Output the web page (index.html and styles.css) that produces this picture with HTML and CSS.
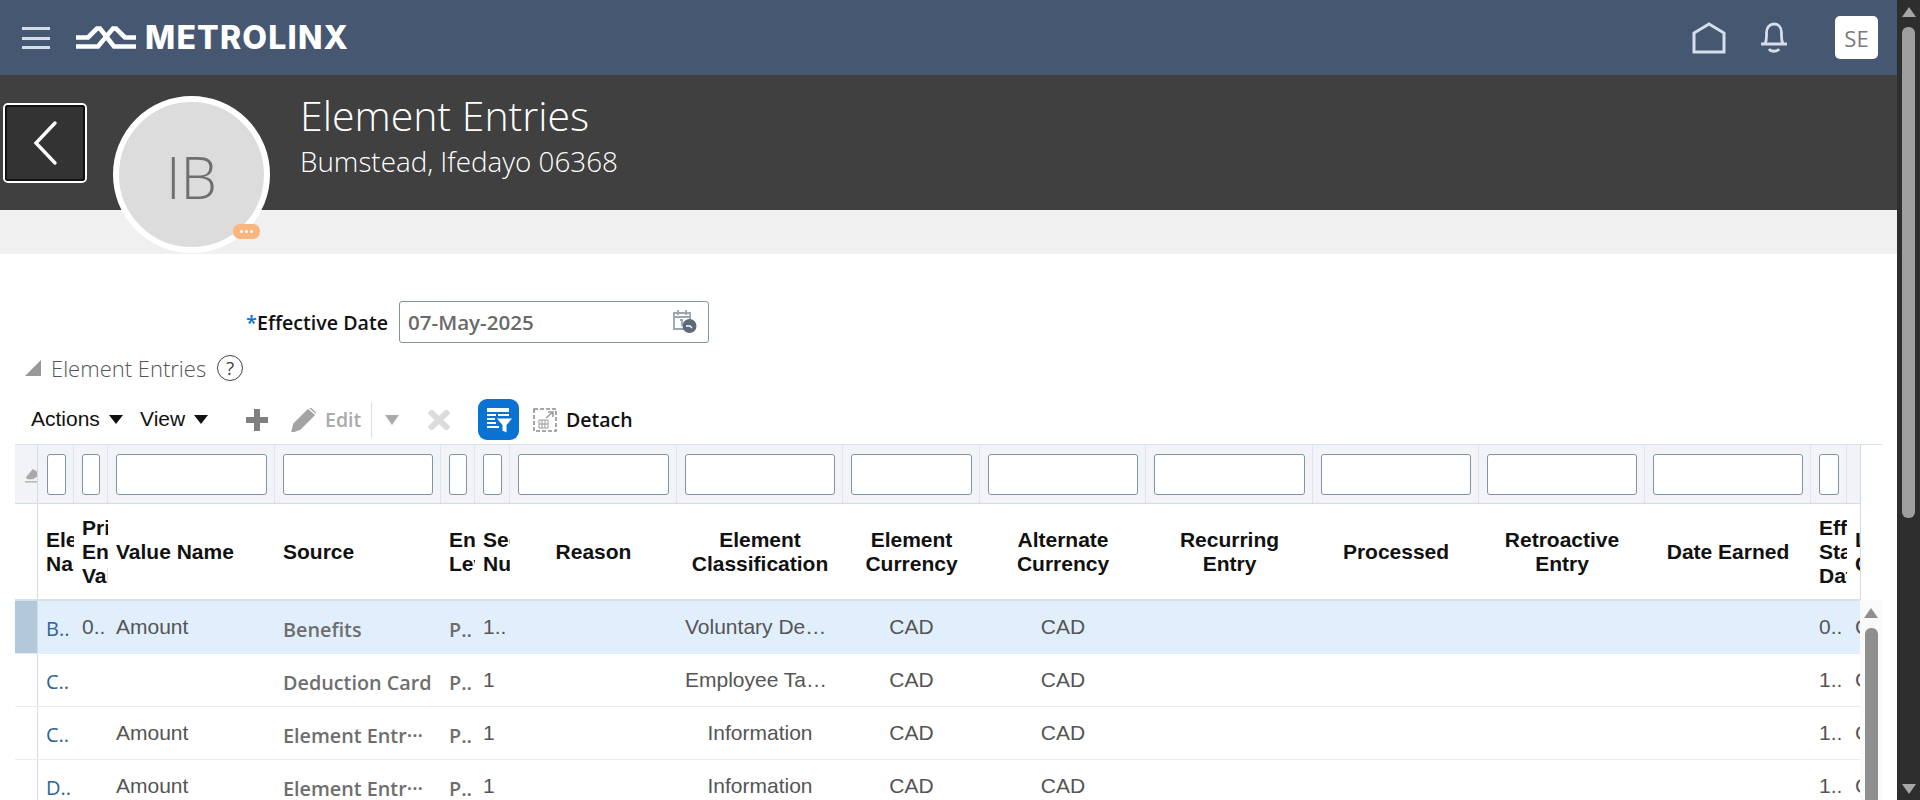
FILE: index.html
```html
<!DOCTYPE html>
<html lang="en">
<head>
<meta charset="utf-8">
<title>Element Entries</title>
<link rel="stylesheet" href="styles.css">
</head>
<body>
<div class="app">
  <div class="page">
    <header class="topbar">
      <div class="menu"><span></span><span></span><span></span></div>
      <svg class="logo-mark" width="60" height="24" viewBox="0 0 60 24"><path d="M0 11.5H12L21 2.5H24L38 20.5H60M0 20.5H22L37 2.5H40L49 11.5H60" fill="none" stroke="#fff" stroke-width="4.600"/></svg>
      <span class="logo-text">METROLINX</span>
      <div class="top-actions">
        <svg class="home" width="34" height="32" viewBox="0 0 34 32"><path d="M2 30V11L17 2L32 11V30Z" fill="none" stroke="#d5deea" stroke-width="3"/></svg>
        <svg class="bell" width="28" height="32" viewBox="0 0 28 32"><path d="M1 22H27M5 22C7 18 6.500 14 6.500 10.500C6.500 5 10 2 14 2C18 2 21.500 5 21.500 10.500C21.500 14 21 18 23 22M9 27C11 30 17 30 19 27" fill="none" stroke="#d5deea" stroke-width="2.800"/></svg>
        <div class="user-tile">SE</div>
      </div>
    </header>

    <section class="hero">
      <button class="back" type="button" aria-label="Back"><svg width="26" height="46" viewBox="0 0 26 46"><path d="M23 3L4 23L23 43" fill="none" stroke="#fff" stroke-width="3.400" stroke-linecap="round"/></svg></button>
      <div class="avatar">IB<span class="badge"><i></i><i></i><i></i></span></div>
      <div class="hero-text">
        <h1>Element Entries</h1>
        <p>Bumstead, Ifedayo 06368</p>
      </div>
    </section>
    <div class="band"></div>

    <main class="content">
      <div class="date-row">
        <label class="date-label"><span class="req">*</span>Effective Date</label>
        <div class="date-input">
          <span>07-May-2025</span>
          <svg width="28" height="26" viewBox="0 0 28 26"><path d="M3 4H19V20H3ZM3 8H19M7 1V6M15 1V6M9 11H11V17" fill="none" stroke="#9aa5ae" stroke-width="1.800"/><circle cx="18.500" cy="17" r="7" fill="#5d6b78"/><path d="M15 17H19L21 19" fill="none" stroke="#fff" stroke-width="1.300"/></svg>
        </div>
      </div>

      <div class="section-title">
        <span class="tri"></span>
        <h2>Element Entries</h2>
        <span class="help">?</span>
      </div>

      <div class="toolbar">
        <span class="menu-btn actions">Actions<i class="caret"></i></span>
        <span class="menu-btn view">View<i class="caret"></i></span>
        <svg class="plus" width="22" height="22" viewBox="0 0 22 22"><path d="M11 0V22M0 11H22" stroke="#808080" stroke-width="6"/></svg>
        <svg class="pencil" width="26" height="24" viewBox="0 0 26 24"><path d="M1 24L3 16L17 2L23 7L9 21ZM19 0L25 5" fill="#a3a3a3" stroke="#a3a3a3" stroke-width="1.500"/></svg>
        <span class="edit">Edit</span>
        <span class="sep"></span>
        <i class="caret small"></i>
        <svg class="cross" width="22" height="20" viewBox="0 0 22 20"><path d="M1.500 1L20.500 19M20.500 1L1.500 19" stroke="#dcdcdc" stroke-width="6"/></svg>
        <span class="filter-btn">
          <svg width="30" height="30" viewBox="0 0 30 30"><path d="M3 3H25V7H3ZM3 9H12V11H3ZM3 13H11V15H3ZM3 17H12V19H3ZM3 21H15V23H3ZM14 9H25V11H14Z" fill="#fff"/><path d="M12 13H29L23 20V28L18 26V20Z" fill="#fff" stroke="#0a72d1" stroke-width="1"/></svg>
        </span>
        <svg class="detach-icon" width="24" height="24" viewBox="0 0 24 24"><path d="M1 1H23V23H1Z" fill="none" stroke="#8a8a8a" stroke-width="1.500" stroke-dasharray="4 2"/><path d="M13 10L20 4M15 4H20V9" fill="none" stroke="#9a9a9a" stroke-width="1.500"/><path d="M6 12H15V20H6ZM6 16H15M9 12V20M12 12V20" fill="none" stroke="#9a9a9a"/></svg>
        <span class="detach">Detach</span>
      </div>

      <div class="table">
        <div class="grid-area">
          <div class="row filters">
            <div class="fcell sel-head"><svg width="14" height="20" viewBox="0 0 14 20"><path d="M1 13L9 3L14 6V12L9 15H3Z" fill="#a8a8a8"/><path d="M0 18H14" stroke="#a8a8a8" stroke-width="1.500"/></svg></div>
            <div class="fcell first"><input class="filter" aria-label="Element Name"></div>
            <div class="fcell"><input class="filter" aria-label="Primary Entry Value"></div>
            <div class="fcell"><input class="filter" aria-label="Value Name"></div>
            <div class="fcell"><input class="filter" aria-label="Source"></div>
            <div class="fcell"><input class="filter" aria-label="Entry Level"></div>
            <div class="fcell"><input class="filter" aria-label="Sequence Number"></div>
            <div class="fcell"><input class="filter" aria-label="Reason"></div>
            <div class="fcell"><input class="filter" aria-label="Element Classification"></div>
            <div class="fcell"><input class="filter" aria-label="Element Currency"></div>
            <div class="fcell"><input class="filter" aria-label="Alternate Currency"></div>
            <div class="fcell"><input class="filter" aria-label="Recurring Entry"></div>
            <div class="fcell"><input class="filter" aria-label="Processed"></div>
            <div class="fcell"><input class="filter" aria-label="Retroactive Entry"></div>
            <div class="fcell"><input class="filter" aria-label="Date Earned"></div>
            <div class="fcell"><input class="filter" aria-label="Effective Start Date"></div>
            <div class="fcell"></div>
            <div class="fcell"></div>
          </div>
          <div class="row heads">
            <div class="hcell sel-col"></div>
            <div class="hcell"><span>Element Name</span></div>
            <div class="hcell"><span>Primary Entry Value</span></div>
            <div class="hcell"><span>Value Name</span></div>
            <div class="hcell"><span>Source</span></div>
            <div class="hcell"><span>Entry Level</span></div>
            <div class="hcell"><span>Sequence Number</span></div>
            <div class="hcell mid"><span>Reason</span></div>
            <div class="hcell mid"><span>Element Classification</span></div>
            <div class="hcell mid"><span>Element Currency</span></div>
            <div class="hcell mid"><span>Alternate Currency</span></div>
            <div class="hcell mid"><span>Recurring Entry</span></div>
            <div class="hcell mid"><span>Processed</span></div>
            <div class="hcell mid"><span>Retroactive Entry</span></div>
            <div class="hcell mid"><span>Date Earned</span></div>
            <div class="hcell"><span>Effective Start Date</span></div>
            <div class="hcell last"><span>Last Changed</span></div>
          </div>
          <div class="row data selected">
            <div class="cell sel-col"></div>
            <div class="cell"><a class="link">B..</a></div>
            <div class="cell">0..</div>
            <div class="cell">Amount</div>
            <div class="cell src">Benefits</div>
            <div class="cell src">P..</div>
            <div class="cell">1..</div>
            <div class="cell"></div>
            <div class="cell">Voluntary De…</div>
            <div class="cell mid">CAD</div>
            <div class="cell mid">CAD</div>
            <div class="cell"></div><div class="cell"></div><div class="cell"></div><div class="cell"></div>
            <div class="cell">0..</div>
            <div class="cell">CAD</div>
          </div>
          <div class="row data">
            <div class="cell sel-col"></div>
            <div class="cell"><a class="link">C..</a></div>
            <div class="cell"></div>
            <div class="cell"></div>
            <div class="cell src">Deduction Card</div>
            <div class="cell src">P..</div>
            <div class="cell">1</div>
            <div class="cell"></div>
            <div class="cell">Employee Ta…</div>
            <div class="cell mid">CAD</div>
            <div class="cell mid">CAD</div>
            <div class="cell"></div><div class="cell"></div><div class="cell"></div><div class="cell"></div>
            <div class="cell">1..</div>
            <div class="cell">CAD</div>
          </div>
          <div class="row data">
            <div class="cell sel-col"></div>
            <div class="cell"><a class="link">C..</a></div>
            <div class="cell"></div>
            <div class="cell">Amount</div>
            <div class="cell src">Element Entr···</div>
            <div class="cell src">P..</div>
            <div class="cell">1</div>
            <div class="cell"></div>
            <div class="cell mid">Information</div>
            <div class="cell mid">CAD</div>
            <div class="cell mid">CAD</div>
            <div class="cell"></div><div class="cell"></div><div class="cell"></div><div class="cell"></div>
            <div class="cell">1..</div>
            <div class="cell">CAD</div>
          </div>
          <div class="row data">
            <div class="cell sel-col"></div>
            <div class="cell"><a class="link">D..</a></div>
            <div class="cell"></div>
            <div class="cell">Amount</div>
            <div class="cell src">Element Entr···</div>
            <div class="cell src">P..</div>
            <div class="cell">1</div>
            <div class="cell"></div>
            <div class="cell mid">Information</div>
            <div class="cell mid">CAD</div>
            <div class="cell mid">CAD</div>
            <div class="cell"></div><div class="cell"></div><div class="cell"></div><div class="cell"></div>
            <div class="cell">1..</div>
            <div class="cell">CAD</div>
          </div>
        </div>
        <div class="inner-scroll">
          <div class="inner-head"></div>
          <div class="inner-track">
            <span class="arrow-up"></span>
            <span class="inner-thumb"></span>
          </div>
        </div>
      </div>
    </main>
  </div>
  <aside class="page-scroll">
    <span class="arrow-up light"></span>
    <span class="page-thumb"></span>
    <span class="arrow-down"></span>
  </aside>
</div>
</body>
</html>
```
FILE: styles.css
```css
* { box-sizing: border-box; }
html, body { margin: 0; height: 100%; overflow: hidden; }
body { font-family: "Open Sans", "Liberation Sans", sans-serif; background: #fff; color: #333; }
.app { display: flex; width: 1920px; height: 800px; overflow: hidden; }
.page { width: 1897px; flex: none; overflow: hidden; }

/* top bar */
.topbar { height: 75px; background: #465771; display: flex; align-items: center; padding-left: 22px; }
.menu { width: 28px; height: 22px; display: flex; flex-direction: column; justify-content: space-between; margin-right: 26px; margin-top: 1px; }
.menu span { display: block; height: 3px; background: #d3deea; }
.logo-mark { flex: none; margin-right: 9px; margin-top: 1px; }
.logo-text { font-family: Inter, "Liberation Sans", sans-serif; font-weight: 800; font-size: 32px; letter-spacing: 1.200px; color: #fff; line-height: 1; }
.top-actions { margin-left: auto; display: flex; align-items: center; padding-right: 19px; }
.home { margin-right: 34px; }
.bell { margin-right: 47px; }
.user-tile { width: 43px; height: 43px; border-radius: 5px; background: #fff; color: #7a7a7a; font-size: 22px; display: flex; align-items: center; justify-content: center; }

/* title band */
.hero { position: relative; height: 135px; background: #404040; display: flex; }
.back { position: absolute; left: 3px; top: 28px; width: 84px; height: 80px; background: #333; border: 2px solid #fff; outline: 2px solid #111; outline-offset: -4px; border-radius: 5px; padding: 0; display: flex; align-items: center; justify-content: center; }
.avatar { position: absolute; left: 113px; top: 21px; width: 157px; height: 157px; border-radius: 50%; background: #dcdcdc; border: 6px solid #fff; color: #6f6f6f; font-weight: 300; font-size: 58px; display: flex; align-items: center; justify-content: center; padding-top: 4px; z-index: 2; }
.badge { position: absolute; left: 114px; top: 122px; width: 27px; height: 15px; border-radius: 7px; background: #f8b57f; display: flex; align-items: center; justify-content: center; gap: 2px; }
.badge i { width: 3px; height: 3px; background: #fff; border-radius: 50%; }
.hero-text { margin-left: 300px; color: #fff; padding-top: 15px; }
.hero-text h1 { margin: 0; font-weight: 300; font-size: 41px; line-height: 50px; }
.hero-text p { margin: 0; font-weight: 300; font-size: 27.800px; line-height: 42px; }
.band { height: 44px; background: #f0f0f0; }

/* form */
.content { padding-left: 15px; }
.date-row { display: flex; align-items: center; margin-top: 47px; padding-left: 231px; }
.date-label { width: 153px; font-weight: 600; font-size: 19.600px; color: #111; white-space: nowrap; }
.req { color: #0a72d1; font-size: 20px; }
.date-input { width: 310px; height: 42px; border: 1px solid #7f95a5; border-radius: 3px; display: flex; align-items: center; justify-content: space-between; padding: 0 9px 0 8px; color: #6a6a6a; font-weight: 600; font-size: 20.600px; }

.section-title { display: flex; align-items: center; height: 34px; margin-top: 8px; padding-left: 10px; }
.tri { width: 0; height: 0; border-left: 16px solid transparent; border-bottom: 16px solid #999; margin-right: 10px; }
.section-title h2 { margin: 0; font-weight: 300; font-size: 22px; color: #555; }
.help { margin-left: 11px; width: 26px; height: 26px; border: 1.500px solid #444; border-radius: 50%; display: flex; align-items: center; justify-content: center; font-size: 19px; color: #444; }

/* toolbar */
.toolbar { display: flex; align-items: center; height: 41px; margin-top: 14px; margin-bottom: 4px; padding-left: 16px; }
.menu-btn { display: flex; align-items: center; font-family: "Liberation Sans", Arial, sans-serif; font-size: 21px; color: #111; line-height: 1; margin-top: -3px; }
.actions { width: 109px; }
.view { width: 106px; }
.caret { display: inline-block; width: 0; height: 0; border-left: 7px solid transparent; border-right: 7px solid transparent; border-top: 9px solid #111; margin: 3px 0 0 9px; }
.caret.small { border-left-width: 7px; border-right-width: 7px; border-top: 10px solid #aaa; margin: 0 29px 0 13px; }
.plus { margin-right: 23px; }
.pencil { margin-right: 8px; }
.edit { font-size: 19.500px; font-weight: 600; color: #aaa; width: 46px; }
.sep { width: 1px; height: 36px; background: #ddd; }
.cross { margin-right: 28px; }
.filter-btn { width: 41px; height: 41px; border-radius: 9px; background: #0a72d1; display: flex; align-items: center; justify-content: center; margin-right: 14px; }
.detach-icon { margin-right: 9px; }
.detach { font-size: 19.500px; font-weight: 600; color: #111; }

/* table */
.table { display: flex; width: 1867px; }
.grid-area { width: 1845px; overflow: hidden; flex: none; }
.row { display: grid; grid-template-columns: 23px 36px 34px 167px 166px 34px 35px 167px 166px 137px 166px 167px 166px 166px 166px 36px 60px; width: 1906px; }
.filters { height: 60px; background: #f1f3f6; border-top: 1px solid #d9e1e8; border-bottom: 1px solid #d3dce4; }
.fcell { border-right: 1px solid #dfe5ec; padding: 9px 7px 8px 8px; display: flex; }
.fcell.first { padding-left: 9px; }
.sel-head { padding: 20px 0 0 10px; overflow: hidden; border-right-color: #d3dce4; }
.filter { width: 100%; min-width: 0; height: 41px; padding: 0; background: #fff; border: 1px solid #7f95a5; border-radius: 3px; outline: 0; }
.heads { height: 97px; border-bottom: 2px solid #d9e1e8; }
.hcell { display: flex; align-items: center; padding-left: 8px; overflow: hidden; font-family: "Liberation Sans", Arial, sans-serif; font-weight: 700; font-size: 21px; line-height: 24px; color: #111; }
.hcell.mid { justify-content: center; text-align: center; padding: 0 10px; }
.sel-col { border-right: 1px solid #d3dce4; }
.data { height: 53px; border-bottom: 1px solid #ececec; }
.selected { background: #e1effd; border-bottom-color: #e1effd; }
.selected .sel-col { background: #b3c8d8; }
.cell { display: flex; align-items: center; padding-left: 8px; overflow: hidden; white-space: nowrap; font-family: "Liberation Sans", Arial, sans-serif; font-size: 21px; color: #555; }
.cell.mid { justify-content: center; padding: 0 6px; }
.src { font-family: "Open Sans", "Liberation Sans", sans-serif; color: #6e6e6e; font-weight: 600; padding-top: 4px; font-size: 19.800px; }
.link { font-family: "Open Sans", "Liberation Sans", sans-serif; color: #2f6399; font-weight: 500; font-size: 20px; padding-top: 3px; }

/* inner scrollbar */
.inner-scroll { width: 22px; flex: none; display: flex; flex-direction: column; }
.inner-head { height: 156px; border-top: 1px solid #d9e1e8; border-left: 1px solid #d3dce4; }
.inner-track { flex: 1; background: #fafafa; display: flex; flex-direction: column; align-items: center; padding-top: 8px; min-height: 200px; }
.arrow-up { width: 0; height: 0; border-left: 7px solid transparent; border-right: 7px solid transparent; border-bottom: 10px solid #8f8f8f; }
.inner-thumb { width: 13px; height: 180px; margin-top: 10px; background: #8f8f8f; border-radius: 6px 6px 0 0; }

/* page scrollbar */
.page-scroll { width: 23px; flex: none; background: #2e2e2e; display: flex; flex-direction: column; align-items: center; padding-top: 7px; }
.arrow-up.light { border-bottom-color: #a6a6a6; }
.page-thumb { width: 13px; height: 491px; margin-top: 10px; border-radius: 6px; background: #9f9f9f; }
.arrow-down { width: 0; height: 0; margin-top: auto; margin-bottom: 6px; border-left: 7px solid transparent; border-right: 7px solid transparent; border-top: 10px solid #a6a6a6; }
```
